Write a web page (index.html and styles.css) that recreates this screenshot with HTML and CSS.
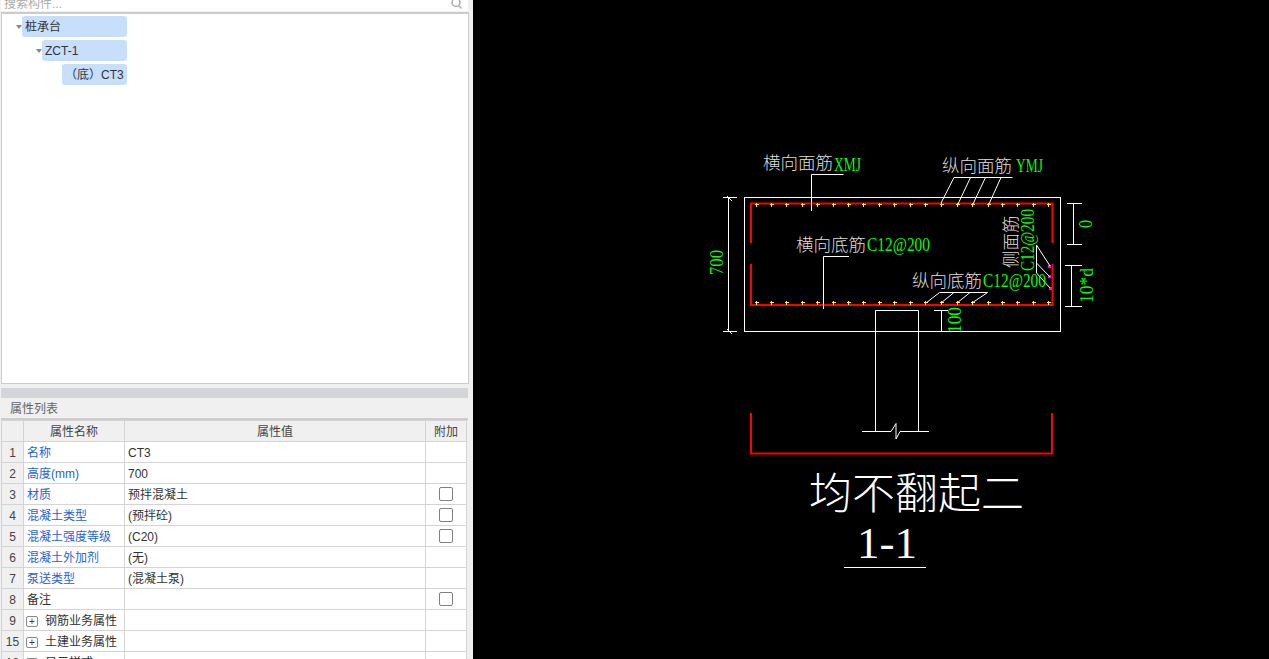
FILE: index.html
```html
<!DOCTYPE html>
<html lang="en">

<head>
    <meta charset="UTF-8">
    <meta name="viewport" content="width=device-width, initial-scale=1.0">
    <title>截面编辑</title>
    <link rel="stylesheet" href="styles.css">
</head>

<body>
    <div class="app">
        <div class="left-panel">
            <div class="search-box">
                <span>搜索构件...</span>
                <svg class="search-icon" width="14" height="11" viewBox="0 0 14 11">
                    <circle cx="6" cy="2.5" r="4" fill="none" stroke="#aaa" stroke-width="1.5" />
                    <line x1="9" y1="6" x2="11.5" y2="8.5" stroke="#aaa" stroke-width="1.5" />
                </svg>
            </div>

            <div class="tree-box">
                <div class="tree-row level-0"><span class="arrow"></span><span class="tree-label">桩承台</span></div>
                <div class="tree-row level-1"><span class="arrow"></span><span class="tree-label">ZCT-1</span></div>
                <div class="tree-row level-2"><span class="tree-label leaf">（底）CT3</span></div>
            </div>

            <div class="splitter"></div>
            <div class="panel-title">属性列表</div>

            <table class="prop-table">
                <colgroup>
                    <col class="col-num">
                    <col class="col-name">
                    <col class="col-value">
                    <col class="col-extra">
                </colgroup>
                <thead>
                    <tr>
                        <th></th>
                        <th>属性名称</th>
                        <th>属性值</th>
                        <th>附加</th>
                    </tr>
                </thead>
                <tbody>
                    <tr>
                        <td class="num">1</td>
                        <td class="link">名称</td>
                        <td>CT3</td>
                        <td></td>
                    </tr>
                    <tr>
                        <td class="num">2</td>
                        <td class="link">高度(mm)</td>
                        <td>700</td>
                        <td></td>
                    </tr>
                    <tr>
                        <td class="num">3</td>
                        <td class="link">材质</td>
                        <td>预拌混凝土</td>
                        <td class="check"><span class="checkbox"></span></td>
                    </tr>
                    <tr>
                        <td class="num">4</td>
                        <td class="link">混凝土类型</td>
                        <td>(预拌砼)</td>
                        <td class="check"><span class="checkbox"></span></td>
                    </tr>
                    <tr>
                        <td class="num">5</td>
                        <td class="link">混凝土强度等级</td>
                        <td>(C20)</td>
                        <td class="check"><span class="checkbox"></span></td>
                    </tr>
                    <tr>
                        <td class="num">6</td>
                        <td class="link">混凝土外加剂</td>
                        <td>(无)</td>
                        <td></td>
                    </tr>
                    <tr>
                        <td class="num">7</td>
                        <td class="link">泵送类型</td>
                        <td>(混凝土泵)</td>
                        <td></td>
                    </tr>
                    <tr>
                        <td class="num">8</td>
                        <td>备注</td>
                        <td></td>
                        <td class="check"><span class="checkbox"></span></td>
                    </tr>
                    <tr>
                        <td class="num">9</td>
                        <td><span class="expand">+</span>钢筋业务属性</td>
                        <td></td>
                        <td></td>
                    </tr>
                    <tr>
                        <td class="num">15</td>
                        <td><span class="expand">+</span>土建业务属性</td>
                        <td></td>
                        <td></td>
                    </tr>
                    <tr>
                        <td class="num">18</td>
                        <td><span class="expand">+</span>显示样式</td>
                        <td></td>
                        <td></td>
                    </tr>
                </tbody>
            </table>
        </div>

        <div class="canvas">
            <svg class="drawing" width="796" height="659" viewBox="473 0 796 659">
                <!-- outline and column -->
                <g class="line-white">
                    <rect x="744.5" y="197.5" width="316" height="134" />
                    <path d="M875.5 331V310.5H918.5V431.5" />
                    <path d="M875.5 331V431.5" />
                    <path d="M862 431.5H891L896 423.5V439L900 431.5H929" />
                </g>

                <!-- rebar -->
                <g class="line-red">
                    <path d="M751 243V203.5H1052.5V243" />
                    <path d="M751 264V305H1052.5V264" />
                    <path d="M751 413V453.5H1052V413" />
                </g>
                <g id="topDots" class="dots"></g>
                <g id="bottomDots" class="dots"></g>
                <g class="dots-pink">
                    <rect x="1048" y="265" width="3" height="3" />
                    <rect x="1048" y="275" width="3" height="3" />
                    <rect x="1049" y="287" width="3" height="3" />
                </g>

                <!-- leaders -->
                <g class="line-white">
                    <path d="M843.5 174.5H811.5V211" />
                    <path d="M1012.5 177.5H954L941 203M970.5 177.5L958 204M985.5 177.5L973 204M1001 177.5L989 204" />
                    <path d="M849 256.5H823.5V309" />
                    <path d="M987.5 292.5H939.5L926 303M954 292.5L941 303M970 292.5L957 303M987.5 292.5L972 303" />
                    <path d="M1036.5 245V273M1036.5 245L1050 266M1036.5 263L1050 277M1036.5 273L1050 288" />
                </g>

                <!-- dimensions -->
                <g class="line-white">
                    <path d="M728.5 197V331M723 197.5H737M723 331.5H737M727 196L732 201M727 329L732 334" />
                    <path d="M1073.5 203V245M1067 203.5H1082M1067 244.5H1082" />
                    <path d="M1071.5 265V306M1065 265.5H1082M1065 306.5H1082" />
                    <path d="M941.5 310V331M934 310.5H948" />
                </g>

                <!-- labels -->
                <text class="cad-cn" x="763" y="169">横向面筋</text>
                <text class="cad-green" x="834" y="171" textLength="27" lengthAdjust="spacingAndGlyphs">XMJ</text>
                <text class="cad-cn" x="942" y="172">纵向面筋</text>
                <text class="cad-green" x="1016" y="172" textLength="27" lengthAdjust="spacingAndGlyphs">YMJ</text>
                <text class="cad-cn" x="796" y="251">横向底筋</text>
                <text class="cad-green" x="867" y="251" textLength="63" lengthAdjust="spacingAndGlyphs">C12@200</text>
                <text class="cad-cn" x="912" y="287">纵向底筋</text>
                <text class="cad-green" x="983" y="287" textLength="63" lengthAdjust="spacingAndGlyphs">C12@200</text>
                <text class="cad-cn" transform="translate(1017 268) rotate(-90)">侧面筋</text>
                <text class="cad-green" transform="translate(1034 271) rotate(-90)" textLength="62" lengthAdjust="spacingAndGlyphs">C12@200</text>
                <text class="cad-green" transform="translate(723 275) rotate(-90)" textLength="25" lengthAdjust="spacingAndGlyphs">700</text>
                <text class="cad-green" transform="translate(1092 228) rotate(-90)" textLength="8" lengthAdjust="spacingAndGlyphs">0</text>
                <text class="cad-green" transform="translate(1093 303) rotate(-90)" textLength="35" lengthAdjust="spacingAndGlyphs">10*d</text>
                <text class="cad-green" transform="translate(961 333) rotate(-90)" textLength="26" lengthAdjust="spacingAndGlyphs">100</text>

                <text class="cad-title" x="809" y="509">均不翻起二</text>
                <text class="cad-section" x="857" y="558" textLength="60" lengthAdjust="spacingAndGlyphs">1-1</text>
                <path class="line-white" d="M844 567.5H926" />
            </svg>
        </div>
    </div>

    <script>
        // Rebar dots along the top and bottom bars
        const dotXs = [756, 771, 786, 802, 817, 833, 848, 863, 879, 894, 910, 925, 941, 957, 972, 988, 1002, 1017, 1033, 1048];

        function addDots(groupId, y) {
            const group = document.getElementById(groupId);
            dotXs.forEach(x => {
                const dot = document.createElementNS('http://www.w3.org/2000/svg', 'path');
                dot.setAttribute('d', `M${x - 1} ${y + 0.5}H${x + 3}M${x + 0.5} ${y - 1}V${y + 3}`);
                group.appendChild(dot);
            });
        }

        addDots('topDots', 204);
        addDots('bottomDots', 302);
    </script>
</body>

</html>
```

FILE: styles.css
```css
html,
body {
    margin: 0;
    height: 100%;
    overflow: hidden;
    background-color: #000;
}

body {
    font-family: "Liberation Sans", "Noto Sans CJK SC", sans-serif;
    font-size: 12px;
    color: #333;
}

.app {
    display: flex;
    height: 659px;
}

.left-panel {
    width: 473px;
    flex: none;
    height: 659px;
    overflow: hidden;
    background-color: #f0f0f0;
    box-sizing: border-box;
    padding-left: 1px;
}

.search-box {
    width: 467px;
    height: 11px;
    display: flex;
    justify-content: space-between;
    align-items: flex-end;
    background: #fff;
    color: #aaa;
    padding-left: 3px;
    line-height: 18px;
    box-sizing: border-box;
    padding-right: 4px;
    margin-bottom: 1px;
}

.search-box span {
    margin-bottom: -2px;
}

.search-icon {
    flex: none;
}

.tree-box {
    width: 468px;
    height: 372px;
    box-sizing: border-box;
    border: 1px solid #ccc;
    border-top-width: 2px;
    background: #fff;
    padding-top: 2px;
}

.tree-row {
    display: flex;
    align-items: center;
    height: 21px;
    margin-bottom: 3px;
    width: 125px;
    box-sizing: border-box;
}

.level-0 {
    padding-left: 14px;
}

.level-1 {
    padding-left: 34px;
}

.level-2 {
    padding-left: 60px;
}

.arrow {
    width: 0;
    height: 0;
    flex: none;
    border-left: 3.5px solid transparent;
    border-right: 3.5px solid transparent;
    border-top: 4px solid #888;
}

.tree-label {
    flex: 1;
    height: 21px;
    line-height: 22px;
    background-color: #c7dffb;
    border-radius: 3px;
    padding-left: 3px;
    font-size: 12px;
    color: #333;
}

.tree-label.leaf {
    padding-left: 3px;
}

.splitter {
    width: 467px;
    height: 10px;
    margin-top: 4px;
    background-color: #d3d5d9;
}

.panel-title {
    width: 467px;
    height: 22px;
    line-height: 23px;
    padding-left: 9px;
    box-sizing: border-box;
    color: #666;
    font-size: 12px;
    background-color: #f0f0f0;
    border-bottom: 2px solid #ccc;
}

.prop-table {
    table-layout: fixed;
    width: 466px;
    border-collapse: collapse;
    background: #fff;
}

.col-num {
    width: 22px;
}

.col-name {
    width: 101px;
}

.col-extra {
    width: 41px;
}

.prop-table th,
.prop-table td {
    height: 18px;
    padding: 2px 3px 0;
    border: 1px solid #d4d4d4;
    font-weight: normal;
    font-size: 12px;
    line-height: 18px;
    white-space: nowrap;
    overflow: hidden;
}

.prop-table th {
    text-align: center;
    background-color: #f0f0f0;
    color: #444;
}

.prop-table .num {
    padding: 2px 0 0;
    text-align: center;
    background-color: #f0f0f0;
    color: #444;
}

.link {
    color: #2563d9;
}

.prop-table .check {
    text-align: center;
    padding: 0;
}

.checkbox {
    display: inline-block;
    width: 14px;
    height: 14px;
    box-sizing: border-box;
    border: 1px solid #808080;
    border-radius: 2px;
    vertical-align: middle;
    background: #fff;
    margin-bottom: 2px;
}

.expand {
    display: inline-block;
    width: 12px;
    height: 11px;
    line-height: 9px;
    box-sizing: border-box;
    border: 1px solid #888;
    border-radius: 2px;
    text-align: center;
    font-size: 10px;
    margin-left: -1px;
    margin-right: 7px;
    vertical-align: 0;
}

.canvas {
    flex: 1;
    background-color: #000;
}

.drawing {
    display: block;
}

.line-white {
    fill: none;
    stroke: #fff;
    stroke-width: 1;
}

.line-red {
    fill: none;
    stroke: #f00;
    stroke-width: 2;
}

.dots {
    fill: none;
    stroke: #ff0;
    stroke-width: 1;
}

.dots-pink {
    fill: #f0f;
}

.cad-cn {
    font-family: "Noto Sans CJK SC", sans-serif;
    font-size: 17.5px;
    font-weight: 300;
    fill: #dedede;
}

.cad-green {
    font-family: "Liberation Serif", serif;
    font-size: 19px;
    fill: #0f0;
}

.cad-title {
    font-family: "Noto Sans CJK SC", sans-serif;
    font-size: 43px;
    font-weight: 300;
    fill: #fff;
}

.cad-section {
    font-family: "Liberation Serif", serif;
    font-size: 44px;
    fill: #fff;
}
```
